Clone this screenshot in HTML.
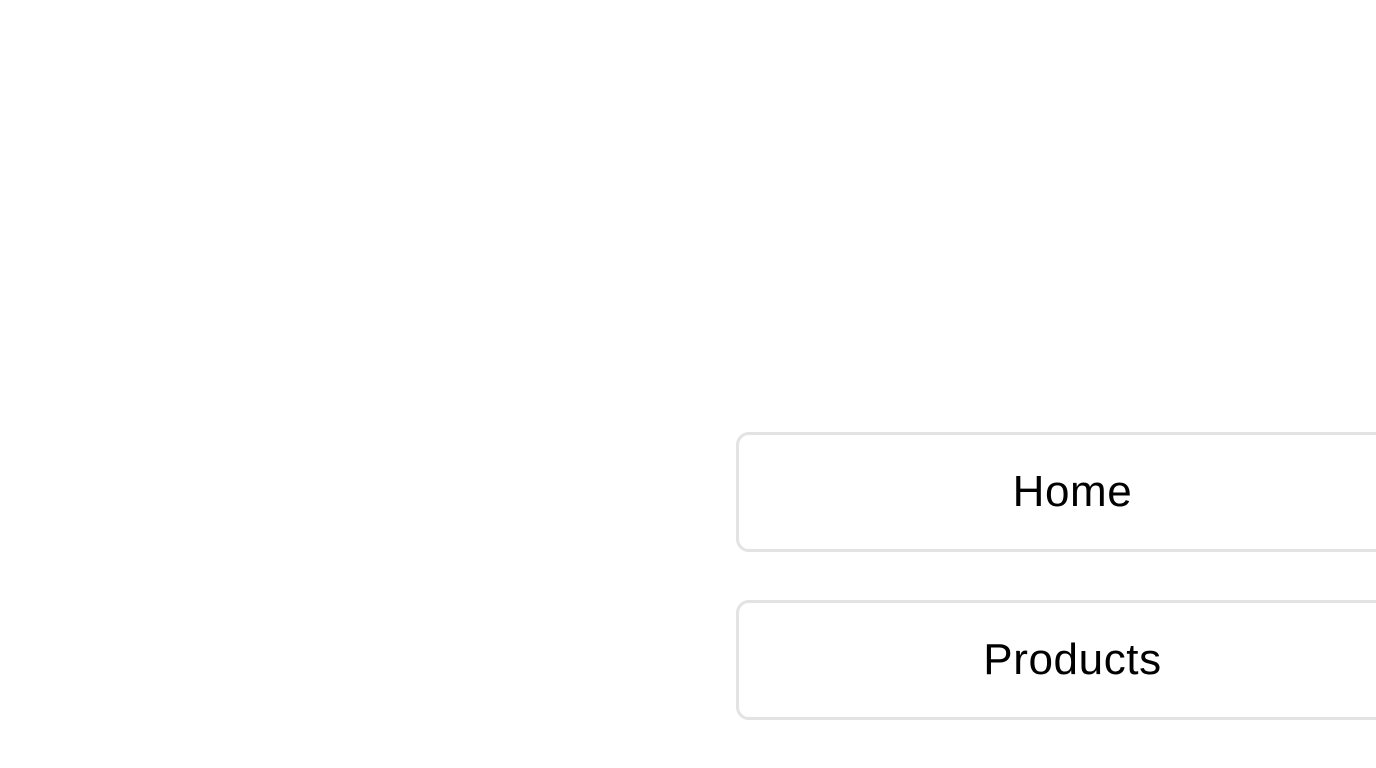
<!DOCTYPE html>
<html><head><style>
html,body{margin:0;padding:0;background:#fff;width:1376px;height:768px;overflow:hidden;position:relative}
.b{position:absolute;left:736px;width:667px;height:114px;border:3px solid #e3e3e3;border-radius:13px;box-sizing:content-box;font-family:"Liberation Sans",sans-serif;font-size:44px;letter-spacing:0.6px;color:#000;text-align:center;line-height:114px}
</style></head><body>
<div class="b" style="top:432px">Home</div>
<div class="b" style="top:600px">Products</div>
</body></html>
